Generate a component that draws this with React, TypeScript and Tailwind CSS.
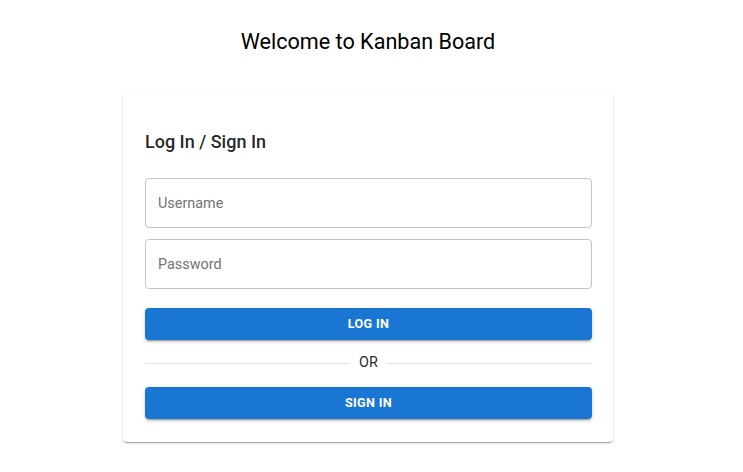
export default function App() {
  return (
    <div className="min-h-screen bg-white pr-[7px] font-['Roboto',sans-serif] text-[rgba(0,0,0,0.87)]">
      <div className="flex flex-col items-center pt-[26px]">
        <h1 className="text-[21.6px] leading-[32px] font-normal text-black">Welcome to Kanban Board</h1>

        <div className="mt-[33px] w-[490px] rounded-[4px] bg-white pl-[22px] pr-[21px] pt-[35px] pb-[23px] shadow-[0px_2px_1px_-1px_rgba(0,0,0,0.2),0px_1px_1px_0px_rgba(0,0,0,0.14),0px_1px_3px_0px_rgba(0,0,0,0.12)]">
          <h2 className="text-[18px] leading-[32px] font-medium">Log In / Sign In</h2>

          <form className="mt-[20px] flex flex-col" onSubmit={(e) => e.preventDefault()}>
            <input
              type="text"
              placeholder="Username"
              className="h-[50px] w-full rounded-[4px] border border-[#c4c4c4] px-3 text-[14.4px] outline-none placeholder:text-[#737373]"
            />
            <input
              type="password"
              placeholder="Password"
              className="mt-[11px] h-[50px] w-full rounded-[4px] border border-[#c4c4c4] px-3 text-[14.4px] outline-none placeholder:text-[#737373]"
            />

            <button
              type="submit"
              className="mt-[19px] h-[32px] w-full rounded-[4px] bg-[#1976d2] text-[12.6px] font-bold tracking-[0.36px] text-white uppercase shadow-[0px_3px_1px_-2px_rgba(0,0,0,0.2),0px_2px_2px_0px_rgba(0,0,0,0.14),0px_1px_5px_0px_rgba(0,0,0,0.12)]"
            >
              Log In
            </button>

            <div className="mt-[13px] flex h-5 items-center">
              <div className="h-px flex-1 bg-[rgba(0,0,0,0.12)]" />
              <span className="px-[9px] text-[14.4px] leading-5">OR</span>
              <div className="h-px flex-1 bg-[rgba(0,0,0,0.12)]" />
            </div>

            <button
              type="button"
              className="mt-[14px] h-[32px] w-full rounded-[4px] bg-[#1976d2] text-[12.6px] font-bold tracking-[0.36px] text-white uppercase shadow-[0px_3px_1px_-2px_rgba(0,0,0,0.2),0px_2px_2px_0px_rgba(0,0,0,0.14),0px_1px_5px_0px_rgba(0,0,0,0.12)]"
            >
              Sign In
            </button>
          </form>
        </div>
      </div>
    </div>
  )
}
